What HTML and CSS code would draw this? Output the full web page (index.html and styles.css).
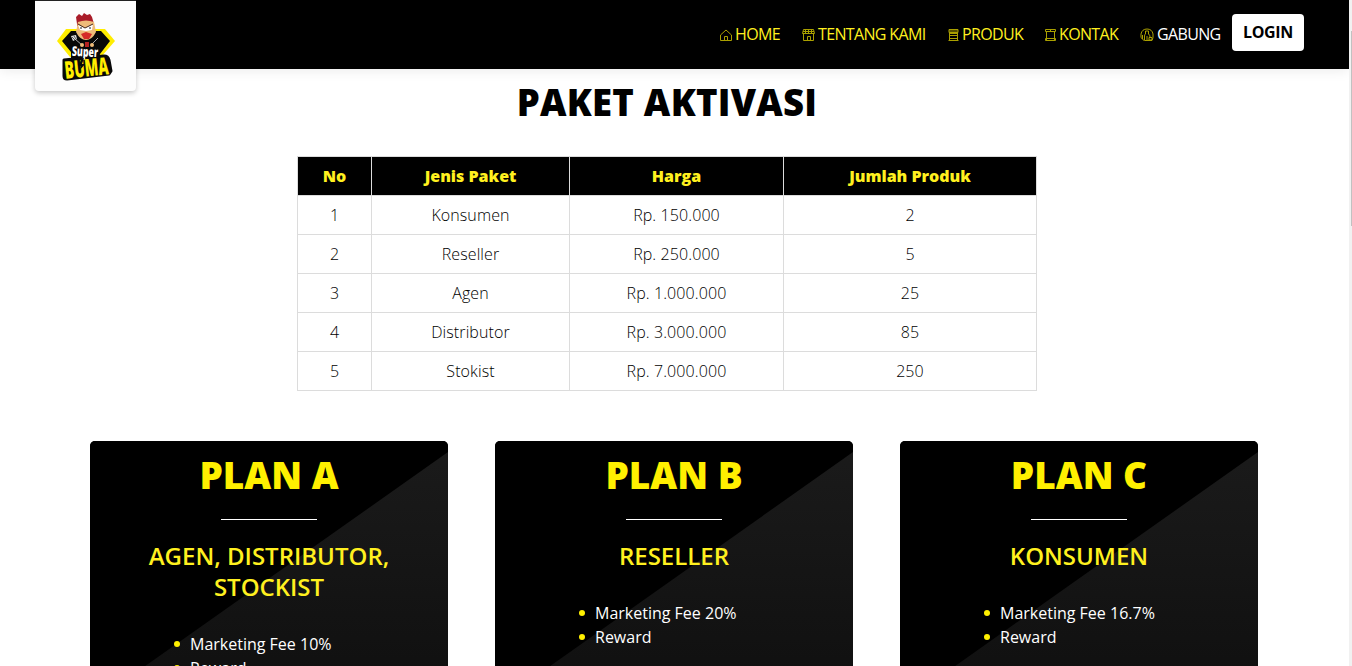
FILE: index.html
```html
<!DOCTYPE html>
<html lang="id">
<head>
<meta charset="utf-8">
<title>Super Buma</title>
<link rel="stylesheet" href="styles.css">
</head>
<body>
<div class="page">
<header class="topbar">
  <a class="brand" href="#">
    <svg width="60" height="70" viewBox="0 0 60 70">
      <path d="M10 16H49L59 28L45 44H14L1 28Z" fill="#ffed00"/>
      <path d="M15 18H45L54 28L44 41L43 46H15V39L6 28Z" fill="#080808"/>
      <path d="M21 11L20 4L23 1L26 3L28 0L31 2L34 1L36 4L38 11V13H21Z" fill="#a91c29"/>
      <path d="M22 9Q30 6 38 9L40 19Q36 27 30 27Q24 27 20 19Z" fill="#efbb79"/>
      <path d="M22 12L29 15L37 11L36 17L30 18L24 17Z" fill="#fff"/>
      <path d="M22 11L29 15L37 11" fill="none" stroke="#43251d" stroke-width="1"/>
      <path d="M25 14V16M34 14V16" stroke="#222" stroke-width="1"/>
      <path d="M25 21L30 19L36 21L33 26H28Z" fill="#d52b27"/>
      <path d="M19 26L26 32M42 25L35 32" stroke="#aaa" stroke-width="1"/>
      <path d="M15 23L20 22L21 26L17 28Z" fill="#ddd"/>
      <path d="M16 24L19 27M18 23L20 26" stroke="#222" stroke-width=".7"/>
      <circle cx="26" cy="32" r="2" fill="#efbb79"/><circle cx="36" cy="32" r="2" fill="#efbb79"/>
      <path d="M29 29H33V34H29Z" fill="#b52222"/>
      <path d="M8 47L48 43Q52 43 53 47L55 58L53 61L11 66Q8 66 8 63Z" fill="#080808" stroke="#080808" stroke-width="3" stroke-linejoin="round"/>
      <text class="logo-super" transform="rotate(3 29 40)" x="16" y="43.500" textLength="26" lengthAdjust="spacingAndGlyphs">Super</text>
      <text class="logo-buma" transform="rotate(-6 30 60)" x="9" y="63.500" textLength="44" lengthAdjust="spacingAndGlyphs">BUMA</text>
      <path d="M25 46L28 45L26 51L29 51L24 57L25 53L23 53Z" fill="#080808"/>
    </svg>
  </a>
  <nav class="menu">
    <a class="item home" href="#"><svg width="12" height="13" viewBox="0 0 12 13"><path d="M.5 11.500V6L6 1L11.500 6V11.500ZM4.500 11.500V7.500H7.500V11.500"/></svg><span>HOME</span></a>
    <a class="item about" href="#"><svg width="13" height="13" viewBox="0 0 13 13"><path d="M1.500 .5H11.500L12.500 4.500H.5ZM1.500 5V11.500H11.500V5M1 2.500H12M3.500 1V5M6.500 1V5M9.500 1V5M5.500 11.500V7.500H8.500V11.500"/></svg><span>TENTANG KAMI</span></a>
    <a class="item product" href="#"><svg width="11" height="13" viewBox="0 0 11 13"><path d="M1 .5H10V3.500H1ZM1.500 4V11.500H9.500V4M1 2H10M2 4.500H9M2 6.500H9M1 9.500H10M.5 11.500H10.500"/></svg><span>PRODUK</span></a>
    <a class="item contact" href="#"><svg width="11" height="13" viewBox="0 0 11 13"><path d="M.5 .5H10.500V2.500H.5ZM1.500 3V11.500H9.500V3M.5 9.500H10.500V11.500H.5ZM5.500 .5V2.500"/></svg><span>KONTAK</span></a>
    <a class="item join" href="#"><svg width="14" height="14" viewBox="0 0 14 14"><path d="M4 12.500Q-.5 10 1 6Q2 1 7 1Q12 1 13 6Q13.500 10 12 12.500H4.500V8Q4.500 6.500 5.500 6V3H8.500V6Q10 7 10 9M2.500 7V11M7 8V12M9 9.500H12V12H9Z"/></svg><span>GABUNG</span></a>
    <a class="login" href="#">LOGIN</a>
  </nav>
</header>
<main>
  <h1 class="title">PAKET AKTIVASI</h1>
  <table class="packages">
    <colgroup><col class="c-no"><col class="c-type"><col class="c-price"><col class="c-count"></colgroup>
    <thead><tr><th>No</th><th>Jenis Paket</th><th>Harga</th><th>Jumlah Produk</th></tr></thead>
    <tbody>
      <tr><td>1</td><td>Konsumen</td><td>Rp. 150.000</td><td>2</td></tr>
      <tr><td>2</td><td>Reseller</td><td>Rp. 250.000</td><td>5</td></tr>
      <tr><td>3</td><td>Agen</td><td>Rp. 1.000.000</td><td>25</td></tr>
      <tr><td>4</td><td>Distributor</td><td>Rp. 3.000.000</td><td>85</td></tr>
      <tr><td>5</td><td>Stokist</td><td>Rp. 7.000.000</td><td>250</td></tr>
    </tbody>
  </table>
  <section class="plans">
    <article class="plan"><h2>PLAN A</h2><hr><h3>AGEN, DISTRIBUTOR, STOCKIST</h3><ul><li>Marketing Fee 10%</li><li>Reward</li></ul></article>
    <article class="plan"><h2>PLAN B</h2><hr><h3>RESELLER</h3><ul><li>Marketing Fee 20%</li><li>Reward</li></ul></article>
    <article class="plan"><h2>PLAN C</h2><hr><h3>KONSUMEN</h3><ul><li>Marketing Fee 16.7%</li><li>Reward</li></ul></article>
  </section>
</main>
</div>
<div class="scroll"><div class="thumb"></div></div>
</body>
</html>
```
FILE: styles.css
```css
* { box-sizing: border-box; }
body { margin: 0; height: 666px; overflow: hidden; display: flex; background: #fff; font-family: "Open Sans", sans-serif; font-size: 16px; color: #212529; }
.page { width: 1349px; height: 666px; overflow: hidden; }
.topbar { height: 69px; background: #000; display: flex; justify-content: space-between; align-items: flex-start; padding: 0 45px 0 35px; box-shadow: 0 2px 12px rgba(0,0,0,.08); }
.brand { width: 101px; height: 91px; background: #fdfdfd; border-radius: 0 0 4px 4px; box-shadow: 0 2px 5px rgba(0,0,0,.22); padding: 12px 0 0 21px; border-top: 1px solid #222; }
.brand svg { display: block; }
.logo-super { font: 800 13.5px "Open Sans", sans-serif; fill: #fff; stroke: #080808; stroke-width: 2px; paint-order: stroke; }
.logo-buma { font: 800 24px "Open Sans", sans-serif; fill: #ffed00; }
.menu { display: flex; padding-top: 14px; }
.item { display: flex; height: 39px; align-items: center; color: #fff01f; text-decoration: none; font-weight: 500; white-space: nowrap; letter-spacing: -.65px; }
.item svg { fill: none; stroke: #aaa000; stroke-width: 1; margin: 3px 3px 0 0; flex: none; }
.home { width: 82px; }
.about { width: 146px; }
.product { width: 97px; }
.contact { width: 95px; }
.join { width: 92px; color: #fff; }
.login { width: 72px; height: 37px; padding-bottom: 1px; background: #fff; color: #000; border-radius: 4px; display: flex; align-items: center; justify-content: center; font-weight: 700; letter-spacing: -.3px; text-decoration: none; }
.title { margin: 7px 0 28px; padding-right: 15px; text-align: center; font-size: 36.5px; line-height: 52px; font-weight: 800; letter-spacing: .25px; color: #000; }
.packages { margin-left: 297px; width: 740px; border-collapse: collapse; table-layout: fixed; text-align: center; }
.c-no { width: 74px; } .c-type { width: 198px; } .c-price { width: 214px; } .c-count { width: 253px; }
.packages th, .packages td { height: 39px; padding: 0; border: 1px solid #dcdcdc; line-height: 24px; }
.packages th { background: #000; color: #fff01f; font-weight: 800; }
.packages td { font-weight: 350; letter-spacing: .1px; color: #000; }
.plans { display: flex; gap: 47px; margin: 50px 0 0 90px; }
.plan { width: 358px; height: 400px; border-radius: 5px 5px 0 0; padding: 11px 40px 0; background: linear-gradient(#1b1b1b, #101010 240px); position: relative; text-align: center; color: #fff; overflow: hidden; isolation: isolate; }
.plan::before { content: ""; position: absolute; inset: 0; z-index: -1; background: #000; clip-path: polygon(0 0, 100% 0, 100% 11px, 0 264px); }
.plan h2 { margin: 0; font-size: 37px; line-height: 46px; font-weight: 800; color: #fff000; }
.plan hr { width: 96px; height: 1px; border: 0; background: #fff; margin: 21px auto 20px; }
.plan h3 { margin: 0; font-size: 24px; line-height: 31px; font-weight: 600; color: #fff01f; }
.plan ul { margin: 30px 0 0 44px; padding: 0; list-style: none; text-align: left; line-height: 24px; }
.plan li { display: flex; align-items: center; gap: 10px; }
.plan li::before { content: ""; width: 6px; height: 6px; border-radius: 50%; background: #fff000; }
.scroll { width: 3px; height: 666px; background: #f1f1f1; padding: 31px 0 0 2px; }
.thumb { height: 195px; background: #c1c1c1; }
```
